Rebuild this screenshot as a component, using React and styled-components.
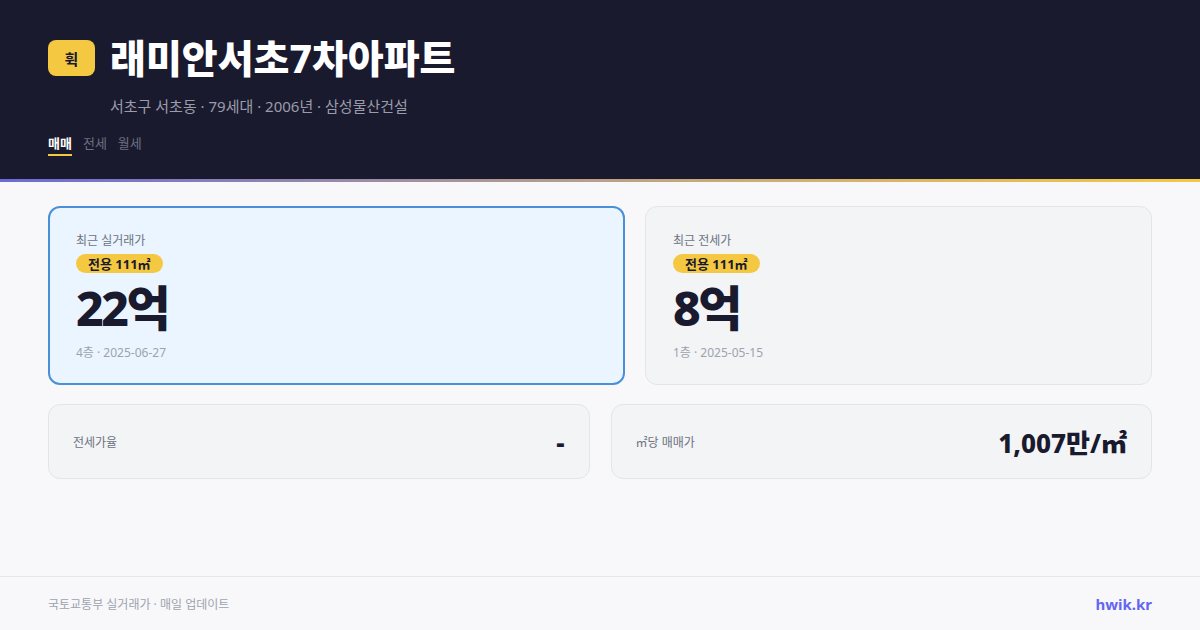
import React from 'react'
import styled, { createGlobalStyle } from 'styled-components'

const GlobalStyle = createGlobalStyle`
  html, body {
    margin: 0;
    padding: 0;
    background: #f8f8fa;
  }
  body {
    font-family: "Noto Sans", "Noto Sans CJK KR", sans-serif;
  }
  * {
    box-sizing: border-box;
  }
`

const apt = {
  badge: '휙',
  name: '래미안서초7차아파트',
  meta: ['서초구 서초동', '79세대', '2006년', '삼성물산건설'],
  tabs: ['매매', '전세', '월세'],
  active: 0,
  trades: [
    { label: '최근 실거래가', area: '전용 111㎡', price: '22억', sub: '4층 · 2025-06-27', highlight: true },
    { label: '최근 전세가', area: '전용 111㎡', price: '8억', sub: '1층 · 2025-05-15' },
  ],
  stats: [
    { label: '전세가율', value: '-' },
    { label: '㎡당 매매가', value: '1,007만/㎡' },
  ],
}

export default function App() {
  return (
    <Page>
      <GlobalStyle />
      <Header>
        <TitleRow>
          <Logo>{apt.badge}</Logo>
          <Title>{apt.name}</Title>
        </TitleRow>
        <Meta>{apt.meta.join(' · ')}</Meta>
        <Tabs>
          {apt.tabs.map((t, i) => (
            <Tab key={t} active={i === apt.active}>{t}</Tab>
          ))}
        </Tabs>
      </Header>
      <Accent />
      <Main>
        <TradeRow>
          {apt.trades.map((tr) => (
            <TradeCard key={tr.label} highlight={tr.highlight}>
              <CardLabel>{tr.label}</CardLabel>
              <AreaPill>{tr.area}</AreaPill>
              <Price>{tr.price}</Price>
              <SubInfo>{tr.sub}</SubInfo>
            </TradeCard>
          ))}
        </TradeRow>
        <StatRow>
          {apt.stats.map((s) => (
            <StatCard key={s.label}>
              <StatLabel>{s.label}</StatLabel>
              <StatValue>{s.value}</StatValue>
            </StatCard>
          ))}
        </StatRow>
      </Main>
      <Footer>
        <Source>국토교통부 실거래가 · 매일 업데이트</Source>
        <Brand>hwik.kr</Brand>
      </Footer>
    </Page>
  )
}

const Page = styled.div`
  width: 1200px;
  height: 630px;
  display: flex;
  flex-direction: column;
  background: #f8f8fa;
  overflow: hidden;
`

const Header = styled.header`
  height: 179px;
  background: #1a1a2e;
  padding: 35px 48px 0;
  display: flex;
  flex-direction: column;
`

const TitleRow = styled.div`
  display: flex;
  align-items: center;
  gap: 15px;
`

const Logo = styled.div`
  width: 47px;
  height: 36px;
  border-radius: 8px;
  background: #f5c842;
  color: #1a1a2e;
  font-size: 15px;
  font-weight: 700;
  display: flex;
  align-items: center;
  justify-content: center;
`

const Title = styled.h1`
  margin: 0;
  font-size: 39px;
  line-height: 46px;
  font-weight: 800;
  color: #ffffff;
`

const Meta = styled.div`
  margin: 15px 0 0 62px;
  font-size: 15px;
  line-height: 20px;
  color: #9a9cab;
`

const Tabs = styled.nav`
  display: flex;
  gap: 11px;
  margin-top: 18px;
`

const Tab = styled.span`
  font-size: 13px;
  line-height: 18px;
  padding-bottom: 2px;
  font-weight: ${(p) => (p.active ? 700 : 400)};
  color: ${(p) => (p.active ? '#ffffff' : '#6e7080')};
  border-bottom: 2px solid ${(p) => (p.active ? '#f5c842' : 'transparent')};
`

const Accent = styled.div`
  height: 3px;
  background: linear-gradient(90deg, #6b6bd6 0%, #c9ab78 60%, #f5c842 100%);
`

const Main = styled.main`
  flex: 1;
  padding: 24px 48px 0;
  display: flex;
  flex-direction: column;
  gap: 19px;
`

const TradeRow = styled.div`
  display: grid;
  grid-template-columns: 577fr 507fr;
  gap: 20px;
`

const TradeCard = styled.div`
  height: 179px;
  border-radius: 12px;
  padding: ${(p) => (p.highlight ? '24px 26px' : '25px 27px')};
  background: ${(p) => (p.highlight ? '#ebf5ff' : '#f3f4f6')};
  border: ${(p) => (p.highlight ? '2px solid #4a90d9' : '1px solid #e4e5e9')};
  display: flex;
  flex-direction: column;
  align-items: flex-start;
`

const CardLabel = styled.div`
  font-size: 12px;
  line-height: 18px;
  color: #6b7280;
`

const AreaPill = styled.span`
  margin-top: 4px;
  height: 23px;
  padding: 0 12px;
  border-radius: 12px;
  background: #f5c842;
  color: #1a1a2e;
  font-size: 13px;
  font-weight: 700;
  display: flex;
  align-items: center;
`

const Price = styled.div`
  margin-top: 10px;
  font-size: 48px;
  line-height: 50px;
  font-weight: 800;
  letter-spacing: -2.5px;
  color: #1a1a2e;
`

const SubInfo = styled.div`
  margin-top: 12px;
  font-size: 12px;
  line-height: 16px;
  color: #9ca3af;
`

const StatRow = styled.div`
  display: grid;
  grid-template-columns: 1fr 1fr;
  gap: 21px;
`

const StatCard = styled.div`
  height: 75px;
  border-radius: 12px;
  border: 1px solid #e4e5e9;
  background: #f3f4f6;
  padding: 0 24px;
  display: flex;
  align-items: center;
  justify-content: space-between;
`

const StatLabel = styled.span`
  font-size: 12px;
  color: #6b7280;
`

const StatValue = styled.span`
  font-size: 26px;
  font-weight: 800;
  color: #1a1a2e;
`

const Footer = styled.footer`
  height: 54px;
  border-top: 1px solid #e5e7eb;
  padding: 0 48px;
  display: flex;
  align-items: center;
  justify-content: space-between;
`

const Source = styled.span`
  font-size: 12px;
  color: #9ca3af;
`

const Brand = styled.span`
  font-size: 15px;
  font-weight: 700;
  color: #6366f1;
`
